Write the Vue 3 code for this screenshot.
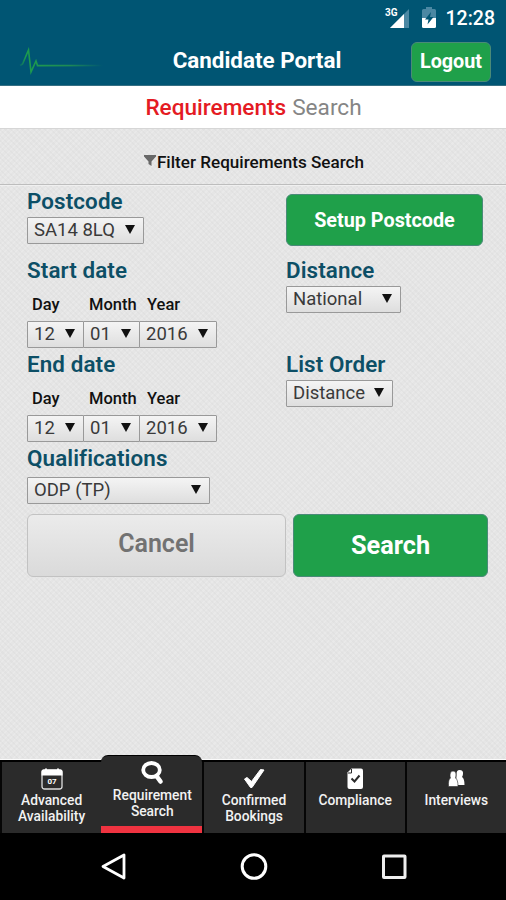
<script setup>
import { ref } from 'vue';

const dateFields = ref([
  { label: 'Day', value: '12', width: 57 },
  { label: 'Month', value: '01', width: 57 },
  { label: 'Year', value: '2016', width: 78 }
]);

const tabs = ref([
  { id: 'availability', lines: ['Advanced', 'Availability'] },
  { id: 'search', lines: ['Requirement', 'Search'] },
  { id: 'bookings', lines: ['Confirmed', 'Bookings'] },
  { id: 'compliance', lines: ['Compliance'] },
  { id: 'interviews', lines: ['Interviews'] }
]);

const activeTab = ref('search');
</script>

<template>
  <div class="portal">
    <header class="header">
      <div class="status-bar">
        <svg class="signal" width="27" height="24" viewBox="0 0 27 24">
          <text x="1" y="10.500" class="network">3G</text>
          <path d="M6 23L25 4V23Z" fill="#4b88a3" />
          <path d="M6 23L20 9V23Z" fill="#fff" />
        </svg>
        <svg class="battery" width="14" height="21" viewBox="0 0 14 21">
          <path d="M4 0h6v2h2.500q1.500 0 1.500 1.500V11H0V3.500Q0 2 1.500 2H4z" fill="#4b88a3" />
          <path d="M0 11h14v8.500q0 1.500-1.500 1.500h-11Q0 21 0 19.500z" fill="#fff" />
          <path d="M9 5L3 12.500H6.500L5.500 17.500L11.500 10H8z" fill="#005573" />
        </svg>
        <span class="clock">12:28</span>
      </div>
      <div class="title-bar">
        <svg class="pulse" width="86" height="30" viewBox="0 0 86 30">
          <defs>
            <linearGradient id="fade" gradientUnits="userSpaceOnUse" x1="0" y1="0" x2="84" y2="0">
              <stop offset="0" stop-color="#1d9d4d" stop-opacity="0.1" />
              <stop offset="0.08" stop-color="#1d9d4d" />
              <stop offset="0.6" stop-color="#1d8a55" />
              <stop offset="1" stop-color="#1d8a55" stop-opacity="0" />
            </linearGradient>
          </defs>
          <path d="M1 18.500L3.500 17L9.500 3L12 25L17 14L18.500 18.600L84 18.500" fill="none" stroke="url(#fade)" stroke-width="1.600" />
        </svg>
        <h1 class="title">Candidate Portal</h1>
        <button class="btn-green logout">Logout</button>
      </div>
    </header>

    <div class="sub-header"><strong>Requirements</strong><span>Search</span></div>

    <div class="filter-bar">
      <svg width="12" height="12" viewBox="0 0 12 12"><path d="M0 0H12V1.500L7.500 6.500V11L4.500 9V6.500L0 1.500Z" fill="#686868" /></svg>
      <span>Filter Requirements Search</span>
    </div>

    <main class="form">
      <div class="fields">
        <div class="field row-post">
          <label class="label">Postcode</label>
          <div class="select post"><span class="value">SA14 8LQ</span><i class="arrow"></i></div>
        </div>
        <div class="field row-post">
          <button class="btn-green setup">Setup Postcode</button>
        </div>

        <div class="field row-date">
          <label class="label">Start date</label>
          <div class="dates">
            <div v-for="f in dateFields" :key="f.label" class="date" :style="{ width: f.width + 'px' }">
              <span class="date-label">{{ f.label }}</span>
              <div class="select"><span class="value">{{ f.value }}</span><i class="arrow"></i></div>
            </div>
          </div>
        </div>
        <div class="field row-date">
          <label class="label">Distance</label>
          <div class="select distance"><span class="value">National</span><i class="arrow"></i></div>
        </div>

        <div class="field row-date">
          <label class="label">End date</label>
          <div class="dates">
            <div v-for="f in dateFields" :key="f.label" class="date" :style="{ width: f.width + 'px' }">
              <span class="date-label">{{ f.label }}</span>
              <div class="select"><span class="value">{{ f.value }}</span><i class="arrow"></i></div>
            </div>
          </div>
        </div>
        <div class="field row-date">
          <label class="label">List Order</label>
          <div class="select order"><span class="value">Distance</span><i class="arrow"></i></div>
        </div>

        <div class="field row-qual">
          <label class="label">Qualifications</label>
          <div class="select qual"><span class="value">ODP (TP)</span><i class="arrow"></i></div>
        </div>
      </div>

      <div class="actions">
        <button class="cancel">Cancel</button>
        <button class="btn-green search">Search</button>
      </div>
    </main>

    <nav class="tabs">
      <div v-for="tab in tabs" :key="tab.id" class="tab" :class="{ active: tab.id === activeTab }">
        <svg v-if="tab.id === 'availability'" class="tab-icon" width="24" height="24" viewBox="0 0 24 24">
          <rect x="2" y="3" width="20" height="19" rx="2.500" fill="none" stroke="#ddd" stroke-width="1.300" />
          <path d="M1.500 8.500V4.500Q1.500 2.500 3.500 2.500H5V1.500H7V2.500H17V1.500H19V2.500H20.500Q22.500 2.500 22.500 4.500V8.500Z" fill="#fff" />
          <text x="12" y="16.500" text-anchor="middle" class="day-number">07</text>
        </svg>
        <svg v-else-if="tab.id === 'search'" class="tab-icon" width="24" height="24" viewBox="0 0 24 24">
          <ellipse cx="11.500" cy="9" rx="8.300" ry="7" fill="none" stroke="#fff" stroke-width="3.800" />
          <path d="M16.500 15L20.500 20.500" stroke="#fff" stroke-width="4.600" stroke-linecap="round" />
        </svg>
        <svg v-else-if="tab.id === 'bookings'" class="tab-icon" width="24" height="24" viewBox="0 0 24 24">
          <path d="M2.500 12L5 10.500L9.500 14.500L18.500 2.500L22 3L10 20.500H8.500Z" fill="#fff" stroke="#fff" stroke-width="1" stroke-linejoin="round" />
        </svg>
        <svg v-else-if="tab.id === 'compliance'" class="tab-icon" width="24" height="24" viewBox="0 0 24 24">
          <path d="M8.500 1.500H18Q20 1.500 20 3.500V20Q20 22 18 22H6.500Q4.500 22 4.500 20V5.500Z" fill="#fff" />
          <path d="M5 6H8.500V2" fill="none" stroke="#2b2b2b" stroke-width="1" />
          <path d="M8.500 11.500L11.500 14.500L16.500 8.500" fill="none" stroke="#2b2b2b" stroke-width="2" />
        </svg>
        <svg v-else class="tab-icon" width="24" height="24" viewBox="0 0 24 24">
          <path d="M12.500 7Q12.500 3 15.500 3Q19.500 3 19 7Q18.800 9 18 10Q20.500 11.500 20.500 18H12Z" fill="#fff" />
          <path d="M6 8Q6 4 9 4Q12.500 4 12 8Q11.800 10 11.500 11Q14 12.500 14 19.500H4.500Q4 12.500 6.500 11Q6 10 6 8Z" fill="#fff" stroke="#2b2b2b" stroke-width="0.600" />
        </svg>
        <span v-for="line in tab.lines" :key="line" class="tab-line">{{ line }}</span>
      </div>
    </nav>

    <footer class="nav-bar">
      <svg width="28" height="30" viewBox="0 0 28 30"><path d="M3 14.500L24 3V26Z" fill="none" stroke="#fff" stroke-width="2.800" stroke-linejoin="round" /></svg>
      <svg width="28" height="30" viewBox="0 0 28 30"><circle cx="14" cy="14.500" r="11.800" fill="none" stroke="#fff" stroke-width="3" /></svg>
      <svg width="28" height="30" viewBox="0 0 28 30"><rect x="3.500" y="4" width="21.500" height="21.500" rx="0.500" fill="none" stroke="#eee" stroke-width="3" /></svg>
    </footer>
  </div>
</template>

<style scoped>
.portal {
  width: 506px;
  height: 900px;
  display: flex;
  flex-direction: column;
  overflow: hidden;
  color: #111;
  font-family: Roboto, "Liberation Sans", sans-serif;
  background-color: #e5e5e5;
  background-image:
    repeating-linear-gradient(45deg, rgba(0, 0, 0, 0.018) 0 1.5px, transparent 1.5px 4px),
    repeating-linear-gradient(-45deg, rgba(255, 255, 255, 0.16) 0 1.5px, transparent 1.5px 4px);
}

button {
  box-sizing: border-box;
  padding: 0;
  font-family: inherit;
  font-weight: 700;
}

.btn-green {
  background: #1fa04a;
  border: 1px solid #4a8a78;
  border-radius: 6px;
  color: #fff;
}

.header {
  height: 86px;
  box-sizing: border-box;
  background: #005573;
  border-bottom: 1px solid #356f83;
  flex-shrink: 0;
}

.status-bar {
  height: 36px;
  display: flex;
  align-items: center;
  justify-content: flex-end;
  padding-right: 11px;
}

.signal {
  margin: -3px 11px 0 0;
}

.network {
  fill: #fff;
  font-size: 10px;
  font-weight: 700;
}

.battery {
  margin: -1px 10px 0 0;
}

.clock {
  color: #fff;
  font-size: 19.5px;
  font-weight: 500;
}

.title-bar {
  height: 50px;
  display: grid;
  grid-template-columns: 153px 1fr 153px;
  align-items: center;
}

.pulse {
  margin: 2px 0 0 19px;
}

.title {
  margin: -3px 0 0 8px;
  text-align: center;
  color: #fff;
  font-size: 22.4px;
  font-weight: 700;
  white-space: nowrap;
}

.logout {
  justify-self: end;
  width: 80px;
  height: 40px;
  margin: 2px 15px 0 0;
  padding-bottom: 2px;
  font-size: 19.8px;
}

.sub-header {
  height: 43px;
  box-sizing: border-box;
  display: flex;
  justify-content: center;
  align-items: center;
  gap: 6px;
  padding: 1px 0 0 1px;
  background: #fff;
  border-bottom: 1px solid #d6d6d6;
  font-size: 22.6px;
  flex-shrink: 0;
}

.sub-header strong {
  color: #e41b23;
  font-weight: 500;
}

.sub-header span {
  color: #858585;
}

.filter-bar {
  height: 56px;
  box-sizing: border-box;
  padding: 10px 0 0 2px;
  display: flex;
  align-items: center;
  justify-content: center;
  gap: 1px;
  border-bottom: 1px solid #bdbdbd;
  box-shadow: 0 1px 0 #f0f0f0;
  font-size: 17.1px;
  font-weight: 500;
  flex-shrink: 0;
}

.filter-bar svg {
  margin-top: -1px;
}

.form {
  flex: 1;
  padding: 4px 0 0 27px;
}

.fields {
  display: grid;
  grid-template-columns: 259px 1fr;
}

.row-post {
  height: 69px;
}

.row-date {
  height: 94px;
}

.row-qual {
  height: 68px;
}

.label {
  display: block;
  height: 24px;
  line-height: 24px;
  margin-bottom: 4px;
  color: #0d4f66;
  font-size: 22.4px;
  font-weight: 600;
  letter-spacing: 0.1px;
}

.row-qual .label {
  margin-bottom: 7px;
}

.select {
  height: 27px;
  box-sizing: border-box;
  display: flex;
  align-items: center;
  justify-content: space-between;
  padding: 0 8px 2px 6px;
  background: linear-gradient(#f4f4f4, #dedede);
  border: 1px solid #999;
  border-radius: 1px;
  color: #3a3a3a;
  font-size: 18.5px;
}

.arrow {
  border: 5px solid transparent;
  border-top: 9px solid #111;
  border-bottom: 0;
}

.post {
  width: 117px;
}

.distance {
  width: 115px;
}

.order {
  width: 107px;
}

.qual {
  width: 183px;
}

.setup {
  width: 197px;
  height: 52px;
  margin-top: 5px;
  font-size: 19.8px;
}

.dates {
  display: flex;
  margin-top: 10px;
}

.date + .date {
  margin-left: -1px;
}

.date-label {
  display: block;
  height: 29px;
  line-height: 25px;
  padding-left: 5px;
  font-size: 16.5px;
  font-weight: 500;
}

.date:nth-child(2) .date-label {
  padding-left: 6px;
}

.date:nth-child(3) .date-label {
  padding-left: 8px;
}

.actions {
  display: flex;
  gap: 7px;
}

.cancel {
  width: 259px;
  height: 63px;
  background: linear-gradient(#ebebeb, #dadada);
  border: 1px solid #c2c2c2;
  border-radius: 6px;
  color: #727272;
  font-size: 25px;
  font-weight: 600;
  padding-bottom: 4px;
}

.search {
  width: 195px;
  height: 63px;
  font-size: 25.3px;
}

.tabs {
  height: 73px;
  display: flex;
  align-items: flex-end;
  background: #000;
  border-top: 1px solid #fafafa;
  flex-shrink: 0;
}

.tab {
  width: 101.2px;
  height: 71px;
  box-sizing: border-box;
  display: flex;
  flex-direction: column;
  align-items: center;
  padding-top: 5px;
  background: #2b2b2b;
  border-left: 2px solid #050505;
  color: #f2f2f2;
}

.tab.active {
  height: 78px;
  padding: 5px 0 0 1px;
  border-top: 1px solid #000;
  border-left: 0;
  border-radius: 7px 7px 0 0;
  background: linear-gradient(#2b2b2b 70px, #ef3340 70px);
}

.tab-icon {
  margin-bottom: 2px;
}

.active .tab-icon {
  margin-bottom: 3px;
}

.tab-line {
  font-size: 13.8px;
  font-weight: 500;
  line-height: 15.5px;
}

.day-number {
  fill: #fff;
  font-size: 8px;
  font-weight: 700;
}

.nav-bar {
  height: 67px;
  padding-left: 2px;
  display: flex;
  align-items: center;
  justify-content: center;
  gap: 112px;
  background: #000;
  flex-shrink: 0;
}
</style>

<style>
body {
  margin: 0;
}
</style>
